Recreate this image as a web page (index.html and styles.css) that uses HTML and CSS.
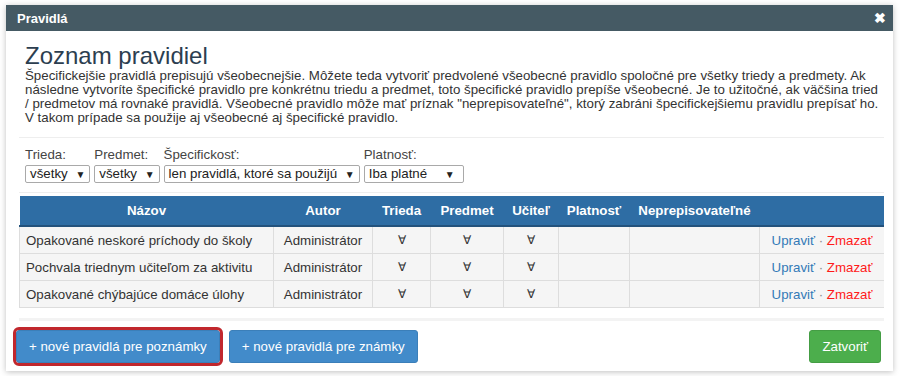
FILE: index.html
```html
<!DOCTYPE html>
<html lang="sk">
<head>
    <meta charset="UTF-8">
    <title>Pravidlá</title>
    <link rel="stylesheet" href="styles.css">
</head>
<body>
    <div class="dialog">
        <div class="dialog-title">
            <span>Pravidlá</span>
            <span class="close">&#10006;</span>
        </div>
        <div class="dialog-body">
            <h2>Zoznam pravidiel</h2>
            <p class="intro">Špecifickejšie pravidlá prepisujú všeobecnejšie. Môžete teda vytvoriť predvolené všeobecné pravidlo spoločné pre všetky triedy a predmety. Ak následne vytvoríte špecifické pravidlo pre konkrétnu triedu a predmet, toto špecifické pravidlo prepíše všeobecné. Je to užitočné, ak väčšina tried / predmetov má rovnaké pravidlá. Všeobecné pravidlo môže mať príznak "neprepisovateľné", ktorý zabráni špecifickejšiemu pravidlu prepísať ho. V takom prípade sa použije aj všeobecné aj špecifické pravidlo.</p>
            <hr class="top">
            <div class="filters">
                <div class="filter">
                    <label>Trieda:</label>
                    <div class="select">všetky <span class="arrow">&#9660;</span></div>
                </div>
                <div class="filter">
                    <label>Predmet:</label>
                    <div class="select">všetky <span class="arrow">&#9660;</span></div>
                </div>
                <div class="filter">
                    <label>Špecifickosť:</label>
                    <div class="select">len pravidlá, ktoré sa použijú <span class="arrow">&#9660;</span></div>
                </div>
                <div class="filter">
                    <label>Platnosť:</label>
                    <div class="select wide">Iba platné <span class="arrow">&#9660;</span></div>
                </div>
            </div>
            <hr>
            <table class="rules">
                <thead>
                    <tr>
                        <th class="c-name">Názov</th>
                        <th class="c-author">Autor</th>
                        <th class="c-class">Trieda</th>
                        <th class="c-subj">Predmet</th>
                        <th class="c-teach">Učiteľ</th>
                        <th class="c-valid">Platnosť</th>
                        <th class="c-lock">Neprepisovateľné</th>
                        <th class="c-act"></th>
                    </tr>
                </thead>
                <tbody>
                    <tr>
                        <td class="left">Opakované neskoré príchody do školy</td>
                        <td>Administrátor</td>
                        <td class="all">&#8704;</td>
                        <td class="all">&#8704;</td>
                        <td class="all">&#8704;</td>
                        <td></td>
                        <td></td>
                        <td class="actions"><a class="edit">Upraviť</a> · <a class="del">Zmazať</a></td>
                    </tr>
                    <tr>
                        <td class="left">Pochvala triednym učiteľom za aktivitu</td>
                        <td>Administrátor</td>
                        <td class="all">&#8704;</td>
                        <td class="all">&#8704;</td>
                        <td class="all">&#8704;</td>
                        <td></td>
                        <td></td>
                        <td class="actions"><a class="edit">Upraviť</a> · <a class="del">Zmazať</a></td>
                    </tr>
                    <tr>
                        <td class="left">Opakované chýbajúce domáce úlohy</td>
                        <td>Administrátor</td>
                        <td class="all">&#8704;</td>
                        <td class="all">&#8704;</td>
                        <td class="all">&#8704;</td>
                        <td></td>
                        <td></td>
                        <td class="actions"><a class="edit">Upraviť</a> · <a class="del">Zmazať</a></td>
                    </tr>
                </tbody>
            </table>
            <hr class="bottom">
            <div class="footer">
                <button class="btn blue marked">+ nové pravidlá pre poznámky</button>
                <button class="btn blue">+ nové pravidlá pre známky</button>
                <button class="btn green close-btn">Zatvoriť</button>
            </div>
        </div>
    </div>
</body>
</html>
```

FILE: styles.css
```css
body {
    margin: 0;
    padding: 5px 6px;
    background: #fff;
    font-family: "Liberation Sans", Arial, sans-serif;
    color: #333;
}

.dialog {
    width: 887px;
    background: #fff;
    box-shadow: 0 1px 6px rgba(0, 0, 0, 0.25);
}

.dialog-title {
    display: flex;
    justify-content: space-between;
    align-items: center;
    height: 26px;
    padding: 0 7px 0 11px;
    background-color: #455a64;
    color: #fff;
    font-size: 13px;
    font-weight: bold;
}

.close {
    font-size: 14px;
}

.dialog-body {
    padding: 12px 9px 8px 13px;
}

h2 {
    margin: 0 0 0 6px;
    font-size: 24px;
    font-weight: normal;
    color: #2c3e50;
    line-height: 26px;
}

.intro {
    margin: 0 0 0 6px;
    font-size: 13.3px;
    line-height: 14px;
    color: #333;
}

hr {
    border: 0;
    border-top: 1px solid #eee;
    margin: 9px 0 0 0;
}

hr.top {
    margin-top: 12px;
}

.filters {
    display: flex;
    gap: 4px;
    padding: 10px 0 0 6px;
}

.filter label {
    display: block;
    font-size: 13.3px;
    color: #444;
    line-height: 14px;
    margin-bottom: 2px;
}

.select {
    display: inline-block;
    border: 1px solid #a9a9a9;
    border-radius: 2px;
    padding: 0 4px 0 4px;
    font-size: 13.3px;
    line-height: 15px;
    color: #222;
}

.select.wide {
    padding-right: 8px;
}

.select .arrow {
    font-size: 10px;
    margin-left: 4px;
}

.select.wide .arrow {
    margin-left: 14px;
}

.rules {
    width: 865px;
    margin: 3px 0 0 0;
    border-collapse: collapse;
    table-layout: fixed;
    font-size: 13.3px;
}

.rules th {
    background-color: #2e6da4;
    color: #fff;
    font-weight: bold;
    height: 29px;
    padding: 0 6px;
    text-align: center;
    border-bottom: 2px solid #23527c;
}

.rules td {
    background-color: #f5f5f5;
    border: 1px solid #ddd;
    height: 26px;
    padding: 0 6px;
    text-align: center;
    color: #333;
    white-space: nowrap;
}

.rules td.left {
    text-align: left;
}

.rules td.all {
    font-size: 12px;
}

.c-name { width: 242px; }
.c-author { width: 87px; }
.c-class { width: 46px; }
.c-subj { width: 61px; }
.c-teach { width: 43px; }
.c-valid { width: 59px; }
.c-lock { width: 118px; }

.rules td.actions {
    color: #888;
    border-right: 0;
    padding: 0;
}

.edit {
    color: #337ab7;
}

.del {
    color: #ff1a1a;
}

hr.bottom {
    margin: 10px 0 0 0;
    width: 865px;
    border-top: 3px solid #f3f3f3;
}

.footer {
    display: flex;
    align-items: center;
    gap: 9px;
    margin: 0 3px 0 -3px;
    padding-top: 9px;
}

.btn {
    font-family: "Liberation Sans", Arial, sans-serif;
    font-size: 13.3px;
    color: #fff;
    border: 1px solid transparent;
    border-radius: 3px;
    height: 33px;
    padding: 0 12px;
}

.blue {
    background-color: #428bca;
    border-color: #3b7fb9;
}

.green {
    background-color: #4cae4c;
    border-color: #449d44;
}

.marked {
    outline: 3px solid #c1272d;
    outline-offset: 0;
}

.close-btn {
    margin-left: auto;
}
```
